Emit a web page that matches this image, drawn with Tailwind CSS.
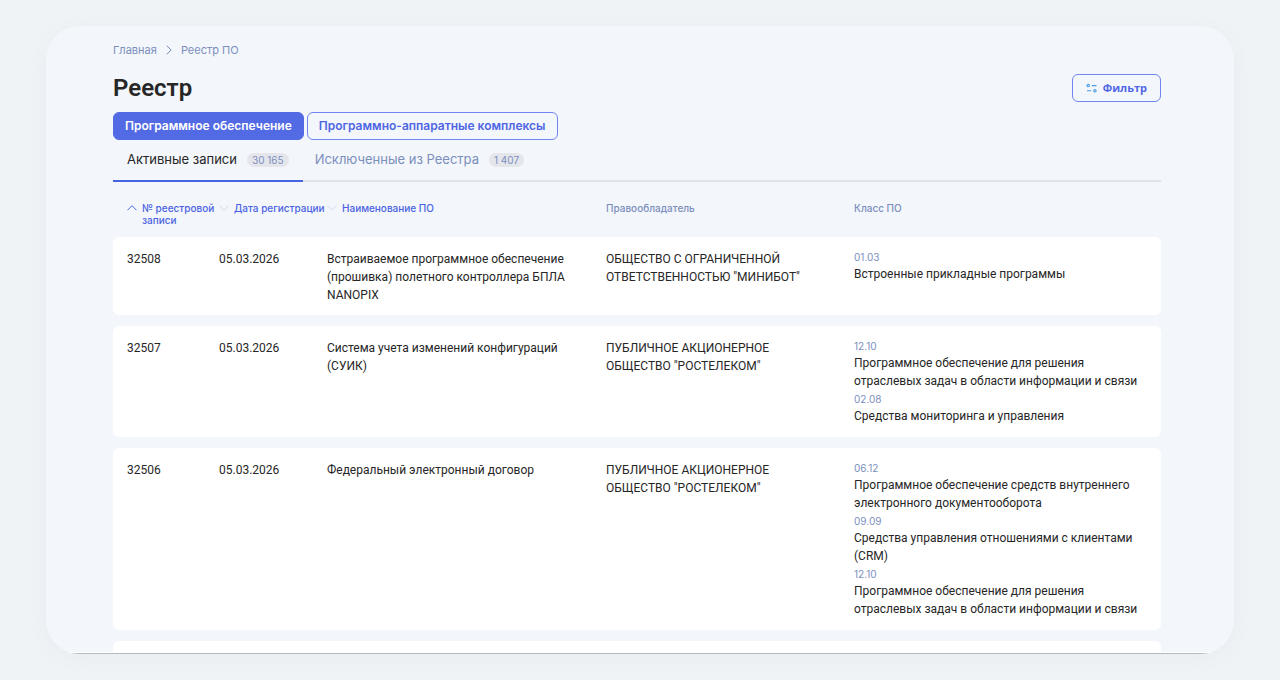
<!DOCTYPE html>
<html lang="ru">
<head>
  <meta charset="UTF-8">
  <meta name="viewport" content="width=device-width, initial-scale=1.0">
  <title>Реестр ПО</title>
  <script src="https://cdn.jsdelivr.net/npm/@tailwindcss/browser@4"></script>
</head>
<body class="h-screen overflow-hidden bg-[#eff3f6] px-[46px] py-[26px] font-['Inter','Liberation_Sans',sans-serif] text-[#262626]">
  <main class="relative h-full overflow-hidden rounded-[34px] bg-[#f3f6fb] pt-4 pr-[73px] pl-[67px] shadow-[0_4px_24px_rgba(40,60,80,0.03)]">
    <!-- Хлебные крошки -->
    <nav class="flex items-center gap-[9px] text-[11px] leading-4 text-[#7b8fbd]">
      <a href="#">Главная</a>
      <svg class="h-2.5 w-1.5" viewBox="0 0 6 10" fill="none" stroke="currentColor"><path d="M0.7 0.7 5.2 5 0.7 9.3"/></svg>
      <a href="#">Реестр ПО</a>
    </nav>

    <!-- Заголовок -->
    <div class="mt-4 flex items-center justify-between">
      <h1 class="font-['Roboto','Inter',sans-serif] text-2xl leading-7 font-semibold">Реестр</h1>
      <button type="button" class="flex h-7 items-center gap-[5px] rounded-md border border-[#7284ee] px-[13px] font-['Open_Sans','Noto_Sans',sans-serif] text-[11px] font-bold text-[#4f66e4]">
        <svg class="h-3 w-3" viewBox="0 0 12 12" fill="none" stroke="#4c9be8" stroke-width="1.1"><circle cx="2.2" cy="3.6" r="1.2"/><path d="M6 3.6H10.5M1 8.8h4.2"/><circle cx="8.9" cy="8.8" r="1.2"/></svg>
        Фильтр
      </button>
    </div>

    <!-- Тип ПО -->
    <div class="mt-2.5 flex gap-[3px] text-xs font-semibold">
      <button type="button" class="h-7 rounded-md border border-[#526be4] bg-[#526be4] px-[11px] text-white">Программное обеспечение</button>
      <button type="button" class="h-7 rounded-md border border-[#7284ee] px-[11px] text-[#4f66e4]">Программно-аппаратные комплексы</button>
    </div>

    <!-- Вкладки -->
    <div class="flex h-[42px] border-b-2 border-[#e0e2ea] text-[13px]">
      <button type="button" class="-mb-0.5 flex items-center gap-2.5 border-b-2 border-[#4464e0] px-3.5">
        Активные записи
        <span class="rounded-full bg-[#e5e6ec] px-[5px] text-[10px] leading-[14px] text-[#7b8fbd]">30 165</span>
      </button>
      <button type="button" class="-mb-0.5 flex items-center gap-2.5 border-b-2 border-transparent px-3 text-[#7b8fbd]">
        Исключенные из Реестра
        <span class="rounded-full bg-[#e5e6ec] px-[5px] text-[10px] leading-[14px]">1 407</span>
      </button>
    </div>

    <!-- Таблица реестра -->
    <table class="mt-[9px] w-full table-fixed border-separate border-spacing-x-0 border-spacing-y-[11px] text-left font-['Roboto','Inter',sans-serif] text-xs leading-[18px]">
      <colgroup>
        <col class="w-[92px]">
        <col class="w-[108px]">
        <col class="w-[279px]">
        <col class="w-[248px]">
        <col>
      </colgroup>
      <thead class="align-top font-['Inter','Liberation_Sans',sans-serif] text-[10px] leading-3 text-[#7b8fbd]">
        <tr>
          <th class="p-0 pl-3.5 font-medium">
            <button type="button" class="flex items-start gap-[5px] text-left whitespace-nowrap text-[#4a63e3]">
              <svg class="h-3 w-2.5 shrink-0" viewBox="0 0 10 12" fill="none" stroke="currentColor"><path d="M0.5 8.2 5 3.7 9.5 8.2"/></svg>
              <span>№ реестровой<br>записи</span>
            </button>
          </th>
          <th class="p-0 pl-3.5 font-medium">
            <button type="button" class="flex items-start gap-[5px] text-left whitespace-nowrap text-[#4a63e3]">
              <svg class="h-3 w-2.5 shrink-0" viewBox="0 0 10 12" fill="none" stroke="#d3daf5"><path d="M0.5 3.7 5 8.2 9.5 3.7"/></svg>
              Дата регистрации
            </button>
          </th>
          <th class="p-0 pl-3.5 font-medium">
            <button type="button" class="flex items-start gap-[5px] text-left text-[#4a63e3]">
              <svg class="h-3 w-2.5 shrink-0" viewBox="0 0 10 12" fill="none" stroke="#d3daf5"><path d="M0.5 3.7 5 8.2 9.5 3.7"/></svg>
              Наименование ПО
            </button>
          </th>
          <th class="p-0 pl-3.5 font-medium">Правообладатель</th>
          <th class="p-0 pl-3.5 font-medium">Класс ПО</th>
        </tr>
      </thead>
      <tbody class="align-top">
        <tr class="bg-white">
          <td class="rounded-l-md pt-[13px] pb-[11px] pl-3.5">32508</td>
          <td class="pt-[13px] pb-[11px] pl-3.5">05.03.2026</td>
          <td class="pt-[13px] pb-[11px] pl-3.5 pr-3">Встраиваемое программное обеспечение (прошивка) полетного контроллера БПЛА NANOPIX</td>
          <td class="pt-[13px] pb-[11px] pl-3.5 pr-3">ОБЩЕСТВО С ОГРАНИЧЕННОЙ ОТВЕТСТВЕННОСТЬЮ "МИНИБОТ"</td>
          <td class="rounded-r-md pt-[13px] pb-3 pl-3.5 pr-3">
            <div class="font-['Inter','Liberation_Sans',sans-serif] text-[10px] leading-[15px] text-[#7b8fbd]">01.03</div>
            <div>Встроенные прикладные программы</div>
          </td>
        </tr>
        <tr class="bg-white">
          <td class="rounded-l-md pt-[13px] pb-[11px] pl-3.5">32507</td>
          <td class="pt-[13px] pb-[11px] pl-3.5">05.03.2026</td>
          <td class="pt-[13px] pb-[11px] pl-3.5 pr-3">Система учета изменений конфигураций (СУИК)</td>
          <td class="pt-[13px] pb-[11px] pl-3.5 pr-3">ПУБЛИЧНОЕ АКЦИОНЕРНОЕ ОБЩЕСТВО "РОСТЕЛЕКОМ"</td>
          <td class="rounded-r-md pt-[13px] pb-3 pl-3.5 pr-3">
            <div class="font-['Inter','Liberation_Sans',sans-serif] text-[10px] leading-[15px] text-[#7b8fbd]">12.10</div>
            <div>Программное обеспечение для решения отраслевых задач в области информации и связи</div>
            <div class="mt-0.5 font-['Inter','Liberation_Sans',sans-serif] text-[10px] leading-[15px] text-[#7b8fbd]">02.08</div>
            <div>Средства мониторинга и управления</div>
          </td>
        </tr>
        <tr class="bg-white">
          <td class="rounded-l-md pt-[13px] pb-[11px] pl-3.5">32506</td>
          <td class="pt-[13px] pb-[11px] pl-3.5">05.03.2026</td>
          <td class="pt-[13px] pb-[11px] pl-3.5 pr-3">Федеральный электронный договор</td>
          <td class="pt-[13px] pb-[11px] pl-3.5 pr-3">ПУБЛИЧНОЕ АКЦИОНЕРНОЕ ОБЩЕСТВО "РОСТЕЛЕКОМ"</td>
          <td class="rounded-r-md pt-[13px] pb-3 pl-3.5 pr-3">
            <div class="font-['Inter','Liberation_Sans',sans-serif] text-[10px] leading-[15px] text-[#7b8fbd]">06.12</div>
            <div>Программное обеспечение средств внутреннего электронного документооборота</div>
            <div class="mt-0.5 font-['Inter','Liberation_Sans',sans-serif] text-[10px] leading-[15px] text-[#7b8fbd]">09.09</div>
            <div>Средства управления отношениями с клиентами (CRM)</div>
            <div class="mt-0.5 font-['Inter','Liberation_Sans',sans-serif] text-[10px] leading-[15px] text-[#7b8fbd]">12.10</div>
            <div>Программное обеспечение для решения отраслевых задач в области информации и связи</div>
          </td>
        </tr>
        <tr class="bg-white">
          <td colspan="5" class="h-20 rounded-md"></td>
        </tr>
      </tbody>
    </table>

    <!-- Нижняя граница окна -->
    <div class="absolute inset-x-0 bottom-0 h-0.5 border-b border-[#b4b9be] bg-white"></div>
  </main>
</body>
</html>
